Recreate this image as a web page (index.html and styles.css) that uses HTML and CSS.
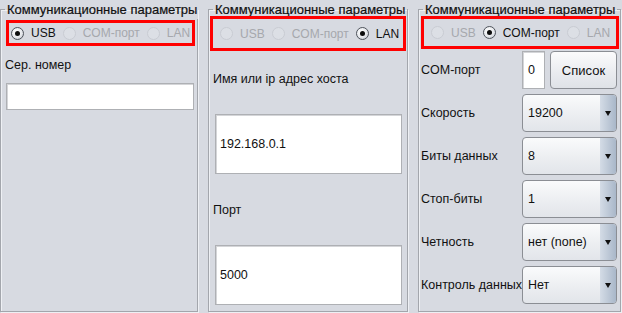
FILE: index.html
```html
<!DOCTYPE html>
<html lang="ru">
<head>
<meta charset="utf-8">
<title>Коммуникационные параметры</title>
<link rel="stylesheet" href="styles.css">
</head>
<body>
<div class="screen">
  <fieldset class="panel panel-usb">
    <legend>Коммуникационные параметры</legend>
    <div class="radios radios-usb">
      <span class="radio on"></span><span class="rlabel">USB</span>
      <span class="radio off"></span><span class="rlabel dis">COM-порт</span>
      <span class="radio off"></span><span class="rlabel dis">LAN</span>
    </div>
    <div class="label l-ser">Сер. номер</div>
    <div class="input in-ser"></div>
  </fieldset>

  <fieldset class="panel panel-lan">
    <legend>Коммуникационные параметры</legend>
    <div class="radios radios-lan">
      <span class="radio off"></span><span class="rlabel dis">USB</span>
      <span class="radio off"></span><span class="rlabel dis">COM-порт</span>
      <span class="radio on"></span><span class="rlabel">LAN</span>
    </div>
    <div class="label l-host">Имя или ip адрес хоста</div>
    <div class="input in-big">192.168.0.1</div>
    <div class="label l-port">Порт</div>
    <div class="input in-big">5000</div>
  </fieldset>

  <fieldset class="panel panel-com">
    <legend>Коммуникационные параметры</legend>
    <div class="radios radios-com">
      <span class="radio off"></span><span class="rlabel dis">USB</span>
      <span class="radio on"></span><span class="rlabel">COM-порт</span>
      <span class="radio off"></span><span class="rlabel dis">LAN</span>
    </div>
    <div class="grid">
      <div class="glabel">COM-порт</div>
      <div class="comrow">
        <div class="input in-small">0</div>
        <div class="button">Список</div>
      </div>
      <div class="glabel">Скорость</div>
      <div class="combo"><span class="cval">19200</span><span class="carrow"></span></div>
      <div class="glabel">Биты данных</div>
      <div class="combo"><span class="cval">8</span><span class="carrow"></span></div>
      <div class="glabel">Стоп-биты</div>
      <div class="combo"><span class="cval">1</span><span class="carrow"></span></div>
      <div class="glabel">Четность</div>
      <div class="combo"><span class="cval">нет (none)</span><span class="carrow"></span></div>
      <div class="glabel">Контроль данных</div>
      <div class="combo"><span class="cval">Нет</span><span class="carrow"></span></div>
    </div>
  </fieldset>
</div>
</body>
</html>
```

FILE: styles.css
```css
* { box-sizing: border-box; }
html, body {
  margin: 0;
  padding: 0;
  background: #d7dae1;
  font-family: "Liberation Sans", Arial, sans-serif;
  font-size: 12.5px;
  color: #111;
}
.screen {
  display: flex;
  gap: 10px;
  width: 622px;
  height: 313px;
  padding-bottom: 1px;
}
.panel {
  margin: 0;
  padding: 0;
  height: 312px;
  border: 1px solid #a3a6ac;
  box-shadow: 1px 1px 0 #eef0f4, inset 1px 1px 0 #eef0f4;
  min-width: 0;
  display: flex;
  flex-direction: column;
}
.panel-usb { width: 198px; }
.panel-lan { width: 200px; }
.panel-com { width: 203px; }
.panel legend {
  margin-left: 4px;
  padding: 0 2px 0 2px;
  line-height: 19px;
  height: 19px;
  color: #111;
  font-size: 13px;
  white-space: nowrap;
  -webkit-text-stroke: 0.2px #111;
}
.radios {
  display: flex;
  align-items: center;
  border: 3px solid #ff0000;
  white-space: nowrap;
  overflow: hidden;
}
.radios-usb { margin: 1px 0 0 5px; width: 189px; height: 26px; padding-left: 2px; }
.radios-lan { margin: -3px 0 0 1px; width: 196px; height: 35px; padding-left: 7px; }
.radios-com { margin: -3px 0 0 2px; width: 198px; height: 33px; padding-left: 7px; }
.radio {
  width: 13px;
  height: 13px;
  border-radius: 50%;
  flex: none;
  margin-right: 7px;
  position: relative;
}
.radio.on {
  border: 1px solid #4f545c;
  background: radial-gradient(circle at 40% 35%, #ffffff 0%, #e6e8ec 55%, #b9bec8 100%);
}
.radio.on::after {
  content: "";
  position: absolute;
  left: 3px;
  top: 3px;
  width: 5px;
  height: 5px;
  border-radius: 50%;
  background: #0c0c0c;
}
.radio.off {
  border: 1px solid #c9ccd3;
  background: #dcdfe5;
}
.rlabel {
  flex: none;
  margin-right: 7px;
  line-height: 14px;
  font-size: 12px;
}
.rlabel.dis { color: #a6a8ad; }

.label { padding-left: 4px; line-height: 14px; white-space: nowrap; }
.l-ser { margin-top: 12px; }
.input {
  background: #fff;
  border: 1px solid #aeb0b4;
  box-shadow: inset 1px 1px 0 #d4d5d8;
}
.in-ser { margin: 11px 0 0 5px; width: 188px; height: 27px; }
.l-host { margin-top: 21px; }
.in-big {
  margin: 28px 0 0 6px;
  width: 187px;
  height: 60px;
  display: flex;
  align-items: center;
  padding-left: 4px;
}
.l-port { margin-top: 29px; }

.grid {
  display: grid;
  grid-template-columns: 101px 95px;
  grid-auto-rows: 38px;
  row-gap: 5px;
  margin: 2px 0 0 2px;
}
.glabel {
  display: flex;
  align-items: center;
  white-space: nowrap;
}
.comrow {
  display: flex;
  gap: 5px;
}
.in-small {
  width: 23px;
  display: flex;
  align-items: center;
  padding-left: 5px;
}
.button {
  flex: 1;
  border: 1px solid #8b8e94;
  border-radius: 4px;
  background: linear-gradient(#fbfbfc, #e9ebef 60%, #dfe2e7);
  display: flex;
  align-items: center;
  justify-content: center;
  font-size: 13px;
}
.combo {
  display: flex;
  border: 1px solid #8b8e94;
  border-radius: 4px;
  background: linear-gradient(#fafbfc, #eceef1 55%, #e2e5ea);
  overflow: hidden;
}
.cval {
  flex: 1;
  display: flex;
  align-items: center;
  padding-left: 5px;
  font-size: 12.5px;
}
.carrow {
  width: 16px;
  flex: none;
  background: linear-gradient(90deg, #d4dce6, #a9b7c9);
  display: flex;
  align-items: center;
  justify-content: center;
}
.carrow::after {
  content: "";
  border-left: 3.5px solid transparent;
  border-right: 3.5px solid transparent;
  border-top: 5px solid #111;
}
```
